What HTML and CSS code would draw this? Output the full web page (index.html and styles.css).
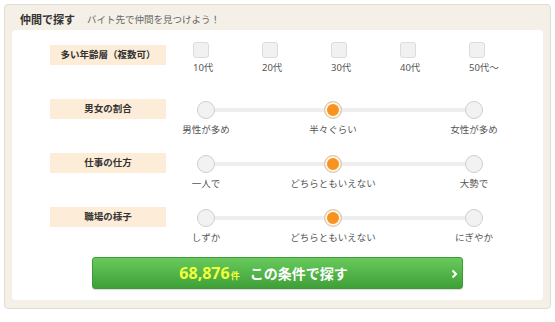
FILE: index.html
```html
<!DOCTYPE html>
<html lang="ja">
<head>
    <meta charset="UTF-8">
    <meta name="viewport" content="width=device-width, initial-scale=1.0">
    <title>仲間で探す</title>
    <link rel="stylesheet" href="styles.css">
</head>
<body>
    <div class="finder">
        <div class="finder-head">
            <h2>仲間で探す</h2>
            <span class="finder-sub">バイト先で仲間を見つけよう！</span>
        </div>

        <div class="panel">
            <div class="row">
                <div class="row-label">多い年齢層（複数可）</div>
                <div class="ages">
                    <label class="age"><span class="check"></span><span class="age-text">10代</span></label>
                    <label class="age"><span class="check"></span><span class="age-text">20代</span></label>
                    <label class="age"><span class="check"></span><span class="age-text">30代</span></label>
                    <label class="age"><span class="check"></span><span class="age-text">40代</span></label>
                    <label class="age"><span class="check"></span><span class="age-text">50代～</span></label>
                </div>
            </div>

            <div class="row">
                <div class="row-label">男女の割合</div>
                <div class="slider">
                    <div class="stop"><span class="knob"></span><span class="stop-text">男性が多め</span></div>
                    <div class="stop mid"><span class="knob on"></span><span class="stop-text">半々ぐらい</span></div>
                    <div class="stop"><span class="knob"></span><span class="stop-text">女性が多め</span></div>
                </div>
            </div>

            <div class="row">
                <div class="row-label">仕事の仕方</div>
                <div class="slider">
                    <div class="stop"><span class="knob"></span><span class="stop-text">一人で</span></div>
                    <div class="stop mid"><span class="knob on"></span><span class="stop-text">どちらともいえない</span></div>
                    <div class="stop"><span class="knob"></span><span class="stop-text">大勢で</span></div>
                </div>
            </div>

            <div class="row last">
                <div class="row-label">職場の様子</div>
                <div class="slider">
                    <div class="stop"><span class="knob"></span><span class="stop-text">しずか</span></div>
                    <div class="stop mid"><span class="knob on"></span><span class="stop-text">どちらともいえない</span></div>
                    <div class="stop"><span class="knob"></span><span class="stop-text">にぎやか</span></div>
                </div>
            </div>

            <a class="search-btn" href="#">
                <span class="count">68,876</span><span class="unit">件</span>
                <span class="btn-text">この条件で探す</span>
                <svg class="chevron" width="7" height="10" viewBox="0 0 7 10">
                    <polyline points="1.5,1.5 5,5 1.5,8.5" fill="none" stroke="#fff" stroke-width="2"/>
                </svg>
            </a>
        </div>
    </div>
</body>
</html>
```

FILE: styles.css
```css
body {
    font-family: "Noto Sans", "Noto Sans CJK JP", sans-serif;
    margin: 0;
    padding: 4px 4px 0 4px;
    background-color: #fff;
    color: #333;
}

.finder {
    box-sizing: border-box;
    width: 547px;
    height: 305px;
    border: 1px solid #e2dccf;
    border-radius: 4px;
    background-color: #f4f0e7;
    padding: 0 7px 8px 7px;
}

.finder-head {
    display: flex;
    align-items: center;
    height: 25px;
    padding: 2px 0 0 8px;
    box-sizing: border-box;
}

.finder-head h2 {
    margin: 0;
    font-size: 11px;
    font-weight: bold;
    color: #333;
}

.finder-sub {
    margin-left: 12px;
    font-size: 9.5px;
    color: #666;
}

.panel {
    background-color: #fff;
    border-radius: 4px;
    height: 270px;
    box-sizing: border-box;
    padding: 12px 0 11px 38px;
}

.row {
    display: flex;
    align-items: flex-start;
    height: 54px;
}

.row.last {
    height: 53px;
}

.row-label {
    width: 116px;
    height: 20px;
    margin-top: 3px;
    margin-right: 27px;
    background-color: #fdecd7;
    font-size: 9.5px;
    font-weight: bold;
    line-height: 20px;
    text-align: center;
    color: #333;
}

.ages {
    display: flex;
}

.age {
    display: flex;
    flex-direction: column;
    align-items: flex-start;
    width: 69px;
}

.check {
    box-sizing: border-box;
    width: 16px;
    height: 16px;
    border: 1px solid #dcdcdc;
    border-radius: 3px;
    background-color: #f1f1f1;
}

.age-text {
    margin-top: 4px;
    font-size: 9.5px;
    line-height: 12px;
    color: #555;
}

.slider {
    position: relative;
    display: flex;
    justify-content: space-between;
    align-items: flex-start;
    width: 286px;
    margin-left: 4px;
    padding-top: 5px;
}

.slider::before {
    content: "";
    position: absolute;
    top: 12px;
    left: 9px;
    right: 9px;
    height: 4px;
    background-color: #eeeeee;
}

.stop {
    position: relative;
    display: flex;
    flex-direction: column;
    align-items: center;
    width: 18px;
}

.stop.mid {
    margin-right: 14px;
}

.knob {
    box-sizing: border-box;
    width: 18px;
    height: 18px;
    border: 1px solid #cfcfcf;
    border-radius: 50%;
    background-color: #f2f2f2;
}

.knob.on {
    border-color: #d9cfbd;
    background-color: #f7931e;
    box-shadow: inset 0 0 0 2px #fbf7ef;
}

.stop-text {
    margin-top: 5px;
    font-size: 9.5px;
    line-height: 12px;
    white-space: nowrap;
    color: #555;
}

.search-btn {
    position: relative;
    display: flex;
    align-items: center;
    justify-content: center;
    box-sizing: border-box;
    width: 371px;
    height: 32px;
    margin-left: 42px;
    padding-right: 28px;
    border: 1px solid #3d9a36;
    border-radius: 3px;
    background: linear-gradient(#68c95c, #3fa038);
    box-shadow: 0 1px 1px rgba(0, 0, 0, 0.15);
    text-decoration: none;
    color: #fff;
}

.count {
    font-size: 16px;
    font-weight: bold;
    color: #f2ff3a;
}

.unit {
    margin-left: 1px;
    font-size: 9px;
    font-weight: bold;
    color: #f2ff3a;
    padding-top: 4px;
}

.btn-text {
    margin-left: 10px;
    font-size: 14px;
    font-weight: bold;
    color: #fff;
}

.chevron {
    position: absolute;
    right: 4px;
    top: 11px;
}
```
